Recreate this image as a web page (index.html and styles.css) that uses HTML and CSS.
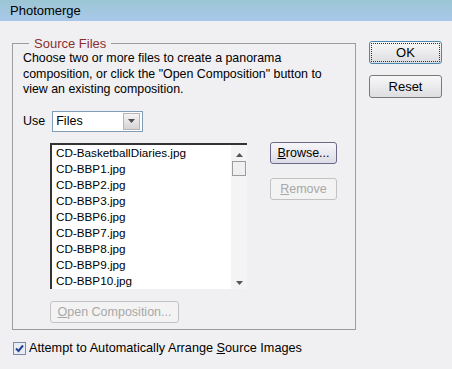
FILE: index.html
```html
<!DOCTYPE html>
<html lang="en">
<head>
    <meta charset="UTF-8">
    <title>Photomerge</title>
    <link rel="stylesheet" href="styles.css">
</head>
<body>
    <div class="titlebar">Photomerge</div>

    <div class="dialog">
        <div class="main">
            <fieldset class="group">
                <legend>Source Files</legend>
                <p class="intro">Choose two or more files to create a panorama<br>composition, or click the "Open Composition" button to<br>view an existing composition.</p>

                <div class="use-row">
                    <label for="use">Use</label>
                    <div class="select">
                        <span>Files</span>
                        <span class="drop">
                            <svg width="7" height="4" viewBox="0 0 7 4"><path d="M0 0h7L3.5 4z" fill="#4d4d4d"/></svg>
                        </span>
                    </div>
                </div>

                <div class="files-row">
                    <div class="listbox">
                        <ul class="files">
                            <li>CD-BasketballDiaries.jpg</li>
                            <li>CD-BBP1.jpg</li>
                            <li>CD-BBP2.jpg</li>
                            <li>CD-BBP3.jpg</li>
                            <li>CD-BBP6.jpg</li>
                            <li>CD-BBP7.jpg</li>
                            <li>CD-BBP8.jpg</li>
                            <li>CD-BBP9.jpg</li>
                            <li>CD-BBP10.jpg</li>
                        </ul>
                        <div class="scrollbar">
                            <svg class="arrow" width="7" height="4" viewBox="0 0 7 4"><path d="M0 4h7L3.5 0z" fill="#555"/></svg>
                            <div class="thumb"></div>
                            <div class="track"></div>
                            <svg class="arrow" width="7" height="4" viewBox="0 0 7 4"><path d="M0 0h7L3.5 4z" fill="#555"/></svg>
                        </div>
                    </div>
                    <div class="side-buttons">
                        <button class="btn"><u>B</u>rowse...</button>
                        <button class="btn" disabled><u>R</u>emove</button>
                    </div>
                </div>

                <button class="btn open-btn" disabled><u>O</u>pen Composition...</button>
            </fieldset>

            <label class="check">
                <span class="box">
                    <svg width="9" height="9" viewBox="0 0 9 9"><path d="M1 4.5l2.5 2.5L8 1.5" fill="none" stroke="#27408b" stroke-width="2"/></svg>
                </span>
                <span>Attempt to Automatically Arrange <u>S</u>ource Images</span>
            </label>
        </div>

        <div class="actions">
            <button class="btn default">OK</button>
            <button class="btn">Reset</button>
        </div>
    </div>
</body>
</html>
```

FILE: styles.css
```css
body {
    margin: 0;
    background-color: #f0f0f2;
    font-family: "Liberation Sans", Arial, sans-serif;
    font-size: 12px;
    color: #000;
    width: 452px;
    height: 369px;
    overflow: hidden;
}
.titlebar {
    height: 21px;
    line-height: 21px;
    padding-left: 10px;
    font-size: 13px;
    background: linear-gradient(#9bc6d4, #a9c8ea);
}
.dialog {
    display: flex;
    padding: 0 10px 0 12px;
}
.main {
    width: 345px;
}
.group {
    margin: 15px 0 0 0;
    padding: 0 10px 10px 10px;
    border: 1px solid #9c9c9c;
    height: 282px;
}
.group legend {
    margin-left: 6px;
    padding: 0 5px;
    color: #8a3030;
    font-size: 13px;
}
.intro {
    margin: 0;
    font-size: 12.4px;
    line-height: 15.5px;
}
.use-row {
    display: flex;
    align-items: center;
    gap: 7px;
    margin-top: 13px;
    font-size: 12.5px;
}
.select {
    display: flex;
    align-items: center;
    justify-content: space-between;
    width: 86px;
    height: 19px;
    border: 1px solid #7f9db9;
    background-color: #fff;
    padding-left: 3px;
}
.drop {
    display: flex;
    align-items: center;
    justify-content: center;
    width: 15px;
    height: 15px;
    margin-right: 2px;
    border: 1px solid #b5b5b5;
    background: linear-gradient(#f4f4f4, #d4d4d4);
}
.files-row {
    display: flex;
    margin-top: 11px;
    margin-left: 27px;
}
.listbox {
    display: flex;
    width: 195px;
    height: 144px;
    border-top: 2px solid #333;
    border-left: 2px solid #333;
    background-color: #fff;
}
.files {
    list-style: none;
    margin: 0;
    padding: 0 0 0 4px;
    flex: 1;
    font-size: 11.7px;
    line-height: 16px;
}
.scrollbar {
    display: flex;
    flex-direction: column;
    align-items: center;
    width: 16px;
    padding: 8px 0 4px;
    background-color: #f4f4f4;
}
.thumb {
    width: 12px;
    height: 13px;
    margin-top: 4px;
    border: 1px solid #9c9c9c;
    background-color: #f0f0f0;
}
.track {
    flex: 1;
}
.btn {
    font-family: inherit;
    font-size: 12.5px;
    color: #000;
    height: 22px;
    border: 1px solid #7a7a7a;
    border-radius: 3px;
    background: linear-gradient(#f8f8f8, #dedee2);
    padding: 0 6px;
    white-space: nowrap;
}
.btn:disabled {
    color: #a8a8a8;
    border-color: #c2c2c2;
    background: #f3f3f3;
}
.side-buttons {
    display: flex;
    flex-direction: column;
    gap: 14px;
    margin-left: 23px;
    margin-top: -1px;
}
.side-buttons .btn {
    width: 67px;
}
.side-buttons .btn:first-child {
    border-color: #6a6a88;
    background: linear-gradient(#f6f6fa, #dcdce6);
}
.open-btn {
    margin: 12px 0 0 27px;
    width: 129px;
}
.check {
    display: flex;
    align-items: center;
    gap: 3px;
    margin-top: 11px;
    margin-left: 1px;
    font-size: 12.7px;
}
.box {
    display: flex;
    align-items: center;
    justify-content: center;
    width: 11px;
    height: 11px;
    border: 1px solid #7a8aa8;
    background-color: #e8ecf4;
}
.actions {
    display: flex;
    flex-direction: column;
    gap: 11px;
    margin: 20px 0 0 13px;
}
.actions .btn {
    width: 73px;
    height: 23px;
    font-size: 13px;
}
.actions .default {
    border: 1px solid #4a8ab0;
    outline: 1px dotted #333;
    outline-offset: -3px;
}
```
